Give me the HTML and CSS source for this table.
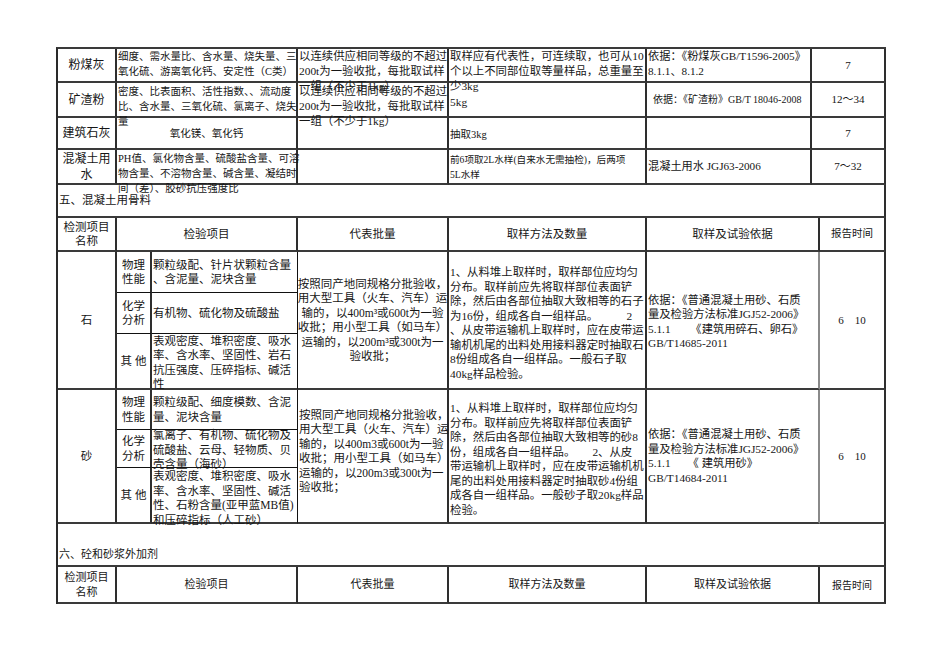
FILE: index.html
```html
<!DOCTYPE html>
<html lang="zh-CN">
<head>
<meta charset="utf-8">
<title>检测项目表</title>
<link rel="stylesheet" href="styles.css">
</head>
<body>
<div class="sheet">
  <div class="top">
    <div class="c m name"><div>粉煤灰</div></div>
    <div class="c t s105"><div>细度、需水量比、含水量、烧失量、三<br>氧化硫、游离氧化钙、安定性（C类）</div></div>
    <div class="c t s114"><div>以连续供应相同等级的不超过<br>200t为一验收批，每批取试样<br>一组（不少于1kg）</div></div>
    <div class="c t s114"><div>取样应有代表性，可连续取，也可从10<br>个以上不同部位取等量样品，总重量至<br>少3kg</div></div>
    <div class="c t s112"><div>依据：《粉煤灰GB/T1596-2005》<br>8.1.1、8.1.2</div></div>
    <div class="c m s11"><div>7</div></div>

    <div class="c m name"><div>矿渣粉</div></div>
    <div class="c t s105 pt1"><div>密度、比表面积、活性指数、、流动度<br>比、含水量、三氧化硫、氯离子、烧失<br>量</div></div>
    <div class="c t s114 pt1"><div>以连续供应相同等级的不超过<br>200t为一验收批，每批取试样<br>一组（不少于1kg）</div></div>
    <div class="c s114 pt6"><div>5kg</div></div>
    <div class="c s10 pl6"><div>依据：《矿渣粉》GB/T 18046-2008</div></div>
    <div class="c m s11"><div>12～34</div></div>

    <div class="c m name"><div>建筑石灰</div></div>
    <div class="c m s105"><div>氧化镁、氧化钙</div></div>
    <div class="c"></div>
    <div class="c s105 pt3"><div>抽取3kg</div></div>
    <div class="c"></div>
    <div class="c m s11"><div>7</div></div>

    <div class="c m name"><div>混凝土用<br>水</div></div>
    <div class="c t s105 pt1"><div>PH值、氯化物含量、硫酸盐含量、可溶<br>物含量、不溶物含量、碱含量、凝结时<br>间（差）、胶砂抗压强度比</div></div>
    <div class="c"></div>
    <div class="c s95"><div>前6项取2L水样(自来水无需抽检)，后两项<br>5L水样</div></div>
    <div class="c s112"><div>混凝土用水 JGJ63-2006</div></div>
    <div class="c m s11"><div>7～32</div></div>
  </div>

  <div class="main">
    <div class="c all s115"><div>五、混凝土用骨料</div></div>

    <div class="c m s115"><div>检测项目<br>名称</div></div>
    <div class="c m s115 span2"><div>检验项目</div></div>
    <div class="c m s115"><div>代表批量</div></div>
    <div class="c m s115"><div>取样方法及数量</div></div>
    <div class="c m s115"><div>取样及试验依据</div></div>
    <div class="c m s105"><div>报告时间</div></div>

    <div class="c m s115 rs3"><div>石</div></div>
    <div class="c m s115 tb"><div>物理<br>性能</div></div>
    <div class="c s115 tb tr"><div>颗粒级配、针片状颗粒含量<br>、含泥量、泥块含量</div></div>
    <div class="c m s115 rs3"><div>按照同产地同规格分批验收，<br>用大型工具（火车、汽车）运<br>输的，以400m³或600t为一验<br>收批；用小型工具（如马车）<br>运输的，以200m³或300t为一<br>验收批；</div></div>
    <div class="c s114 rs3 pt6"><div>1、从料堆上取样时，取样部位应均匀<br>分布。取样前应先将取样部位表面铲<br>除，然后由各部位抽取大致相等的石子<br>为16份，组成各自一组样品。&nbsp;&nbsp;&nbsp;&nbsp;&nbsp;&nbsp;&nbsp;&nbsp;&nbsp;&nbsp;2<br>、从皮带运输机上取样时，应在皮带运<br>输机机尾的出料处用接料器定时抽取石<br>8份组成各自一组样品。一般石子取<br>40kg样品检验。</div></div>
    <div class="c s113 rs3 gr pt3"><div>依据：《普通混凝土用砂、石质<br>量及检验方法标准JGJ52-2006》<br>5.1.1&nbsp;&nbsp;&nbsp;&nbsp;&nbsp;&nbsp;&nbsp;《建筑用碎石、卵石》<br>GB/T14685-2011</div></div>
    <div class="c m s11 rs3"><div>6&nbsp;&nbsp;&nbsp;&nbsp;10</div></div>
    <div class="c m s115 tb"><div>化学<br>分析</div></div>
    <div class="c s115 tb tr"><div>有机物、硫化物及硫酸盐</div></div>
    <div class="c m s115"><div>其&nbsp;他</div></div>
    <div class="c s115 tr pt3"><div>表观密度、堆积密度、吸水<br>率、含水率、坚固性、岩石<br>抗压强度、压碎指标、碱活<br>性</div></div>

    <div class="c m s115 rs3"><div>砂</div></div>
    <div class="c m s115 tb"><div>物理<br>性能</div></div>
    <div class="c s115 tb tr"><div>颗粒级配、细度模数、含泥<br>量、泥块含量</div></div>
    <div class="c s115 rs3 pb10"><div>按照同产地同规格分批验收，<br>用大型工具（火车、汽车）运<br>输的，以400m3或600t为一验<br>收批；用小型工具（如马车）<br>运输的，以200m3或300t为一<br>验收批；</div></div>
    <div class="c s114 rs3 pt6"><div>1、从料堆上取样时，取样部位应均匀<br>分布。取样前应先将取样部位表面铲<br>除，然后由各部位抽取大致相等的砂8<br>份，组成各自一组样品。&nbsp;&nbsp;&nbsp;&nbsp;&nbsp;&nbsp;2、从皮<br>带运输机上取样时，应在皮带运输机机<br>尾的出料处用接料器定时抽取砂4份组<br>成各自一组样品。一般砂子取20kg样品<br>检验。</div></div>
    <div class="c s113 rs3 gr"><div>依据：《普通混凝土用砂、石质<br>量及检验方法标准JGJ52-2006》<br>5.1.1&nbsp;&nbsp;&nbsp;&nbsp;&nbsp;&nbsp;《&nbsp;建筑用砂》<br>GB/T14684-2011</div></div>
    <div class="c m s11 rs3"><div>6&nbsp;&nbsp;&nbsp;&nbsp;10</div></div>
    <div class="c m s115 tb"><div>化学<br>分析</div></div>
    <div class="c s115 tb tr pt3"><div>氯离子、有机物、硫化物及<br>硫酸盐、云母、轻物质、贝<br>壳含量（海砂）</div></div>
    <div class="c m s115"><div>其&nbsp;他</div></div>
    <div class="c s115 tr pt6"><div>表观密度、堆积密度、吸水<br>率、含水率、坚固性、碱活<br>性、石粉含量(亚甲蓝MB值)<br>和压碎指标（人工砂）</div></div>

    <div class="c all s11 bottom"><div>六、砼和砂浆外加剂</div></div>

    <div class="c m s11"><div>检测项目<br>名称</div></div>
    <div class="c m s11 span2"><div>检验项目</div></div>
    <div class="c m s11"><div>代表批量</div></div>
    <div class="c m s11"><div>取样方法及数量</div></div>
    <div class="c m s11"><div>取样及试验依据</div></div>
    <div class="c m s10 pt3"><div>报告时间</div></div>
  </div>
</div>
</body>
</html>
```

FILE: styles.css
```css
body {
  margin: 0;
  background: #ffffff;
}

.sheet {
  padding: 47px 0 0 56px;
  font-family: "Liberation Serif", "Noto Sans CJK SC", serif;
  color: #161616;
}

.top {
  display: grid;
  width: 828px;
  grid-template-columns: 59px 181px 151px 198px 165px 74px;
  grid-template-rows: 34px 35px 32px 35px;
  border-top: 2px solid #3a3a3a;
  border-left: 2px solid #2a2a2a;
}

.main {
  display: grid;
  width: 828px;
  grid-template-columns: 59px 35px 146px 151px 198px 173px 66px;
  grid-template-rows: 33px 34px 41px 41px 56px 40px 38px 56px 43px 37px;
  border-left: 2px solid #2a2a2a;
}

.c {
  box-sizing: border-box;
  display: flex;
  flex-direction: column;
  justify-content: center;
  min-width: 0;
  min-height: 0;
  overflow: visible;
  white-space: nowrap;
  border-right: 2px solid #2e2e2e;
  border-bottom: 2px solid #3a3a3a;
  padding-left: 1px;
  line-height: 15px;
}

.main .c {
  line-height: 14.5px;
}

.t { justify-content: flex-start; }
.m { align-items: center; text-align: center; padding-left: 0; }
.bottom { justify-content: flex-end; padding-bottom: 4px; }
.all { grid-column: 1 / -1; }
.span2 { grid-column: span 2; }
.rs3 { grid-row: span 3; }
.tb { border-bottom-width: 1px; border-bottom-color: #111; }
.tr { border-right-width: 1px; border-right-color: #111; }
.gr { border-right-color: #8a8a8a; }

.pt1 { padding-top: 1px; }
.pt3 { padding-top: 3px; }
.pt6 { padding-top: 6px; }
.pb10 { padding-bottom: 10px; }
.pl6 { padding-left: 6px; }

.name { font-size: 12px; line-height: 16px; }
.s95 { font-size: 9.6px; }
.s10 { font-size: 10px; }
.s105 { font-size: 10.5px; }
.s11 { font-size: 11px; }
.s112 { font-size: 11.2px; }
.s113 { font-size: 11.3px; }
.s114 { font-size: 11.4px; }
.s115 { font-size: 11.5px; }
```
